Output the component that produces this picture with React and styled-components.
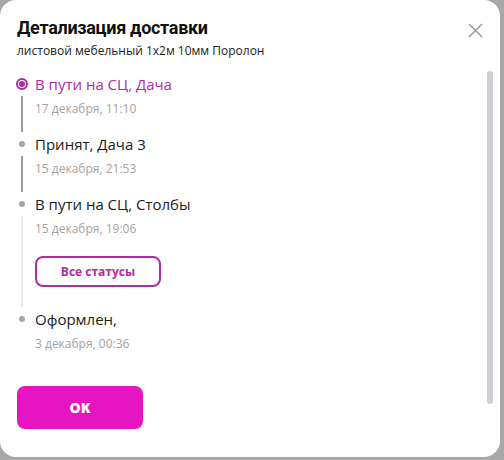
import React from 'react';
import styled, { createGlobalStyle } from 'styled-components';

const GlobalStyle = createGlobalStyle`
  html, body {
    margin: 0;
    padding: 0;
    background: #a8a8a8;
  }
  body {
    font-family: "Open Sans", "Noto Sans", sans-serif;
  }
`;

const statuses = [
  { title: 'В пути на СЦ, Дача', date: '17 декабря, 11:10', active: true, line: 'dark' },
  { title: 'Принят, Дача 3', date: '15 декабря, 21:53', line: 'dark' },
  { title: 'В пути на СЦ, Столбы', date: '15 декабря, 19:06', line: 'light', more: true },
  { title: 'Оформлен,', date: '3 декабря, 00:36' },
];

const App = () => {
  return (
    <>
      <GlobalStyle />
      <Modal>
        <Header>
          <div>
            <Title>Детализация доставки</Title>
            <Subtitle>листовой мебельный 1x2м 10мм Поролон</Subtitle>
          </div>
          <CloseButton aria-label="Закрыть">
            <svg width="15" height="15" viewBox="0 0 15 15">
              <path d="M1 1L14 14M14 1L1 14" stroke="#9a9a9a" strokeWidth="1.5" />
            </svg>
          </CloseButton>
        </Header>
        <Body>
          <Main>
            <Timeline>
              {statuses.map((s) => (
                <Item key={s.title}>
                  <Marker>
                    <DotBox>{s.active ? <Ring /> : <Dot />}</DotBox>
                    {s.line && <Line tone={s.line} />}
                  </Marker>
                  <Content last={!s.line}>
                    <StatusTitle active={s.active}>{s.title}</StatusTitle>
                    <StatusDate>{s.date}</StatusDate>
                    {s.more && <AllButton>Все статусы</AllButton>}
                  </Content>
                </Item>
              ))}
            </Timeline>
            <Footer>
              <OkButton>OK</OkButton>
            </Footer>
          </Main>
          <ScrollThumb />
        </Body>
      </Modal>
    </>
  );
};

const Modal = styled.div`
  width: 500px;
  height: 457px;
  box-sizing: border-box;
  background: #fff;
  border-radius: 16px;
  display: flex;
  flex-direction: column;
  padding: 16px 0 0 17px;
  overflow: hidden;
`;

const Header = styled.div`
  display: flex;
  justify-content: space-between;
  align-items: flex-start;
  padding-right: 17px;
`;

const Title = styled.h1`
  margin: 0;
  font-family: Roboto, "Open Sans", sans-serif;
  font-size: 18px;
  line-height: 24px;
  font-weight: 700;
  letter-spacing: -0.3px;
  color: #111;
`;

const Subtitle = styled.p`
  margin: 3px 0 0;
  font-size: 12px;
  line-height: 16px;
  color: #222;
`;

const CloseButton = styled.button`
  border: none;
  background: none;
  padding: 0;
  margin-top: 7px;
  width: 15px;
  height: 15px;
  cursor: pointer;
  display: flex;
`;

const Body = styled.div`
  flex: 1;
  display: flex;
  padding-right: 7px;
`;

const Main = styled.div`
  flex: 1;
  display: flex;
  flex-direction: column;
`;

const ScrollThumb = styled.div`
  width: 6px;
  height: 333px;
  margin-top: 12px;
  border-radius: 3px;
  background: #cfcfd7;
`;

const Timeline = styled.ul`
  list-style: none;
  margin: 0;
  padding: 15px 0 0;
`;

const Item = styled.li`
  display: flex;
  gap: 6px;
  margin-left: -2px;
`;

const Marker = styled.div`
  width: 14px;
  display: flex;
  flex-direction: column;
  align-items: center;
`;

const DotBox = styled.div`
  height: 20px;
  display: flex;
  align-items: center;
  justify-content: center;
`;

const Ring = styled.span`
  width: 12px;
  height: 12px;
  box-sizing: border-box;
  border: 2px solid #b02ba6;
  border-radius: 50%;
  display: flex;
  align-items: center;
  justify-content: center;
  &::before {
    content: '';
    width: 6px;
    height: 6px;
    border-radius: 50%;
    background: #b02ba6;
  }
`;

const Dot = styled.span`
  width: 6px;
  height: 6px;
  border-radius: 50%;
  background: #a6a6a6;
`;

const Line = styled.div`
  flex: 1;
  width: 2px;
  margin: 2px 0 2px;
  background: ${(p) => (p.tone === 'light' ? '#e8e8e8' : '#9c9c9c')};
`;

const Content = styled.div`
  display: flex;
  flex-direction: column;
  align-items: flex-start;
  padding-bottom: ${(p) => (p.last ? '0' : '17px')};
`;

const StatusTitle = styled.div`
  font-size: 15px;
  line-height: 20px;
  color: ${(p) => (p.active ? '#b02ba6' : '#1c1c1c')};
`;

const StatusDate = styled.div`
  margin-top: 7px;
  font-size: 12px;
  line-height: 16px;
  color: #a3a3a3;
`;

const AllButton = styled.button`
  margin: 19px 0 5px;
  width: 126px;
  height: 31px;
  box-sizing: border-box;
  border: 2px solid #b02ba6;
  border-radius: 8px;
  background: #fff;
  color: #b02ba6;
  font-family: inherit;
  font-size: 12px;
  font-weight: 700;
  cursor: pointer;
`;

const Footer = styled.div`
  margin-top: 34px;
  display: flex;
`;

const OkButton = styled.button`
  width: 126px;
  height: 43px;
  border: none;
  border-radius: 8px;
  background: #e515c1;
  color: #fff;
  font-family: inherit;
  font-size: 14px;
  font-weight: 800;
  cursor: pointer;
`;

export default App;
